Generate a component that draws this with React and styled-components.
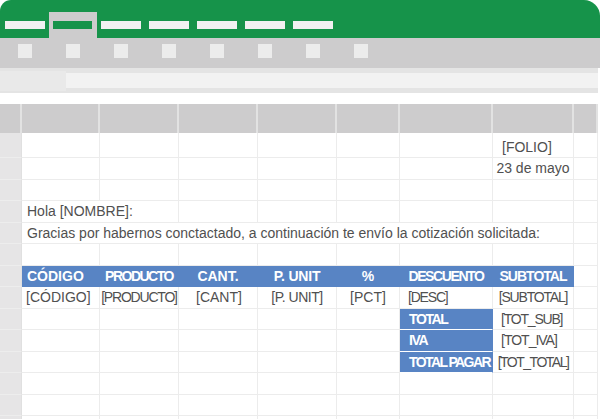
import styled, { createGlobalStyle } from "styled-components"

const GlobalStyle = createGlobalStyle`
  html, body {
    margin: 0;
    padding: 0;
    background: #fff;
  }
  body {
    font-family: "Liberation Sans", Arial, sans-serif;
  }
`

const Window = styled.div`
  width: 600px;
  height: 419px;
  overflow: hidden;
  background: #fff;
  display: flex;
  flex-direction: column;
`

const TitleBar = styled.div`
  flex: none;
  height: 38px;
  background: #16934a;
  border-radius: 11px 16px 0 0;
  display: flex;
  align-items: flex-end;
  padding-left: 1px;
`

const Tab = styled.div`
  width: 48px;
  height: 26px;
  box-sizing: border-box;
  padding: 9px 0 0 4px;
  background: ${p => (p.$active ? "#cdcccd" : "transparent")};
`

const TabLabel = styled.span`
  display: block;
  width: ${p => (p.$active ? 39 : 40)}px;
  height: 8px;
  background: ${p => (p.$active ? "#16934a" : "#f1f1f2")};
`

const Ribbon = styled.div`
  flex: none;
  height: 30px;
  box-sizing: border-box;
  background: #cdcccd;
  display: flex;
  gap: 34px;
  padding: 6px 0 0 18px;
`

const RibbonButton = styled.div`
  width: 14px;
  height: 14px;
  background: #ececec;
`

const FormulaBar = styled.div`
  flex: none;
  height: 25px;
  width: 598px;
  background: #e4e4e4;
  display: flex;
  align-items: center;
`

const NameBox = styled.div`
  width: 66px;
  height: 20px;
  background: #e9e9e9;
`

const FormulaInput = styled.div`
  flex: 1;
  height: 15px;
  background: #f2f2f2;
`

const SheetGap = styled.div`
  flex: none;
  height: 11px;
  width: 598px;
  background: #fff;
`

const Sheet = styled.div`
  display: grid;
  width: 598px;
  grid-template-columns: 22px 78px 79px 79px 79px 63px 93px 81px 24px;
  grid-template-rows: 29px 25px repeat(12, 21.5px) 4px;
`

const ColHeader = styled.div`
  background: #cdcccd;
  border-right: 2px solid #e2e2e2;
  &:last-child {
    border-right: none;
  }
`

const RowHeader = styled.div`
  background: #e6e5e6;
  border-bottom: 1px solid #ededed;
  border-right: 1px solid #e0e0e0;
`

const Cell = styled.div`
  grid-column: ${p => (p.$span ? `span ${p.$span}` : "auto")};
  box-sizing: border-box;
  border-right: 1px solid #ececec;
  border-bottom: 1px solid #ececec;
  display: flex;
  align-items: ${p => (p.$valign === "end" ? "flex-end" : "center")};
  justify-content: ${p => (p.$align === "center" ? "center" : "flex-start")};
  padding: 0 0 ${p => (p.$valign === "end" ? 2 : 0)}px ${p => (p.$align === "center" ? 0 : p.$pl ?? 5)}px;
  font-size: 14px;
  color: #505050;
  letter-spacing: ${p => p.$ls || 0}px;
  white-space: nowrap;
  overflow: visible;
`

const BandCell = styled(Cell)`
  background: #5884c4;
  border-color: #5884c4;
  color: #fff;
  font-weight: bold;
`

const TotalCell = styled(Cell)`
  background: #5884c4;
  border-right-color: #5884c4;
  border-bottom: 1px solid #fff;
  color: #fff;
  font-weight: bold;
`

const tabs = [false, true, false, false, false, false, false]

const rows = [
  { valign: "end", cells: { 7: { text: "[FOLIO]", pl: 9 } } },
  { cells: { 7: { text: "23 de mayo", align: "center" } } },
  { cells: {} },
  { cells: { 1: { text: "Hola [NOMBRE]:", span: 2 } } },
  {
    cells: {
      1: {
        text: "Gracias por habernos conctactado, a continuación te envío la cotización solicitada:",
        span: 7,
      },
    },
  },
  { cells: {} },
  {
    cells: {
      1: { text: "CÓDIGO", kind: "band" },
      2: { text: "PRODUCTO", kind: "band", align: "center", ls: -1.5 },
      3: { text: "CANT.", kind: "band", align: "center" },
      4: { text: "P. UNIT", kind: "band", align: "center", ls: -0.2 },
      5: { text: "%", kind: "band", align: "center" },
      6: { text: "DESCUENTO", kind: "band", align: "center", ls: -1.4 },
      7: { text: "SUBTOTAL", kind: "band", align: "center", ls: -1 },
    },
  },
  {
    cells: {
      1: { text: "[CÓDIGO]", pl: 4 },
      2: { text: "[PRODUCTO]", align: "center", ls: -1.2 },
      3: { text: "[CANT]", pl: 17 },
      4: { text: "[P. UNIT]", align: "center", ls: -0.5 },
      5: { text: "[PCT]", align: "center" },
      6: { text: "[DESC]", pl: 8, ls: -1.2 },
      7: { text: "[SUBTOTAL]", align: "center", ls: -1.2 },
    },
  },
  {
    cells: {
      6: { text: "TOTAL", kind: "total", pl: 9, ls: -1.4 },
      7: { text: "[TOT_SUB]", pl: 8, ls: -1.2 },
    },
  },
  {
    cells: {
      6: { text: "IVA", kind: "total", pl: 9, ls: -1.4 },
      7: { text: "[TOT_IVA]", pl: 8, ls: -1 },
    },
  },
  {
    cells: {
      6: { text: "TOTAL PAGAR", kind: "total", pl: 9, ls: -1.6 },
      7: { text: "[TOT_TOTAL]", align: "center", ls: -1.5 },
    },
  },
  { cells: {} },
  { cells: {} },
  { cells: {} },
]

function SheetRow({ row, index }) {
  const out = [<RowHeader key={`h${index}`} />]
  let col = 1
  while (col <= 8) {
    const c = row.cells[col]
    const Comp = c?.kind === "band" ? BandCell : c?.kind === "total" ? TotalCell : Cell
    out.push(
      <Comp
        key={`${index}-${col}`}
        $span={c?.span}
        $align={c?.align}
        $pl={c?.pl}
        $ls={c?.ls}
        $valign={row.valign}
      >
        {c?.text}
      </Comp>
    )
    col += c?.span || 1
  }
  return out
}

export default function App() {
  return (
    <>
      <GlobalStyle />
      <Window>
        <TitleBar>
          {tabs.map((active, i) => (
            <Tab key={i} $active={active}>
              <TabLabel $active={active} />
            </Tab>
          ))}
        </TitleBar>
        <Ribbon>
          {Array.from({ length: 8 }).map((_, i) => (
            <RibbonButton key={i} />
          ))}
        </Ribbon>
        <FormulaBar>
          <NameBox />
          <FormulaInput />
        </FormulaBar>
        <SheetGap />
        <Sheet>
          {Array.from({ length: 9 }).map((_, i) => (
            <ColHeader key={`c${i}`} />
          ))}
          {rows.map((row, i) => (
            <SheetRow key={i} row={row} index={i} />
          ))}
        </Sheet>
      </Window>
    </>
  )
}
